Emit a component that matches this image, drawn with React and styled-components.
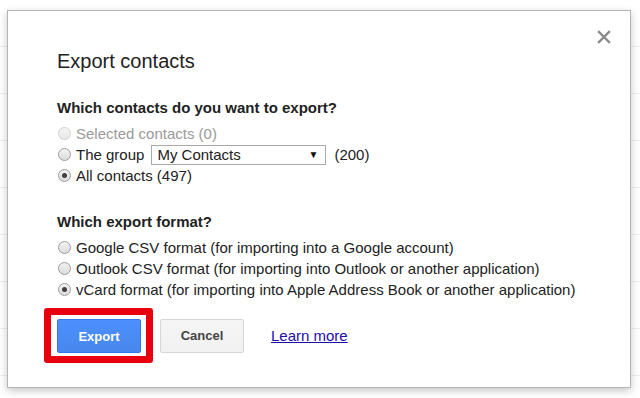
import React, { useState } from "react";
import styled, { createGlobalStyle } from "styled-components";

const GlobalStyle = createGlobalStyle`
  html, body {
    margin: 0;
    padding: 0;
    background: #fff;
  }
  body {
    font-family: "Liberation Sans", Arial, sans-serif;
    color: #222;
  }
`;

const Page = styled.div`
  position: relative;
  width: 640px;
  height: 398px;
  overflow: hidden;
  background: #fff;
`;

const BgRow = styled.div`
  height: 46px;
  border-bottom: 1px solid #efefef;
`;

const Dialog = styled.div`
  position: absolute;
  left: 7px;
  top: 10px;
  width: 624px;
  height: 378px;
  box-sizing: border-box;
  background: #fff;
  border: 1px solid #b4b4b4;
  box-shadow: 0 3px 8px rgba(0, 0, 0, 0.22);
  padding: 38px 0 0 49px;
`;

const Close = styled.button`
  position: absolute;
  right: 18px;
  top: 18px;
  border: 0;
  background: none;
  padding: 0;
  width: 16px;
  height: 16px;
  cursor: pointer;
`;

const Title = styled.h1`
  margin: 0;
  font-size: 20px;
  font-weight: normal;
  color: #222;
  line-height: 24px;
`;

const Section = styled.div`
  margin-top: ${(p) => p.$top}px;
`;

const Heading = styled.h2`
  margin: 0 0 6px;
  font-size: 15px;
  font-weight: bold;
  color: #222;
  line-height: 18px;
`;

const Option = styled.label`
  display: flex;
  align-items: center;
  height: 21px;
  font-size: 15px;
  color: ${(p) => (p.$disabled ? "#9a9a9a" : "#222")};
  cursor: ${(p) => (p.$disabled ? "default" : "pointer")};
`;

const Radio = styled.span`
  width: 13px;
  height: 13px;
  box-sizing: border-box;
  border-radius: 50%;
  margin: 0 5px 0 1px;
  flex: none;
  display: flex;
  align-items: center;
  justify-content: center;
  border: 1px solid ${(p) => (p.$disabled ? "#cfcfcf" : "#9c9c9c")};
  background: ${(p) =>
    p.$disabled
      ? "linear-gradient(#f4f4f4, #e8e8e8)"
      : "linear-gradient(#f2f2f2, #dcdcdc)"};

  &::after {
    content: "";
    width: 5px;
    height: 5px;
    border-radius: 50%;
    background: #404040;
    display: ${(p) => (p.$checked ? "block" : "none")};
  }
`;

const Select = styled.div`
  display: flex;
  align-items: center;
  justify-content: space-between;
  width: 175px;
  height: 20px;
  box-sizing: border-box;
  border: 1px solid #a9a9a9;
  margin: 0 8px 0 7px;
  padding: 0 7px 0 5px;
  font-size: 15px;
  color: #222;
`;

const Arrow = styled.span`
  font-size: 10px;
  color: #111;
`;

const Actions = styled.div`
  display: flex;
  align-items: center;
  margin-top: 8px;
  margin-left: -13px;
`;

const Highlight = styled.div`
  border: 7px solid #e8000e;
  border-radius: 3px;
  padding: 4px 5px 3px 6px;
  margin-right: 7px;
`;

const Button = styled.button`
  width: ${(p) => p.$w}px;
  height: 34px;
  box-sizing: border-box;
  border-radius: 2px;
  font-family: "Liberation Sans", Arial, sans-serif;
  font-size: 13px;
  font-weight: bold;
  cursor: pointer;
  border: 1px solid ${(p) => (p.$primary ? "#3079ed" : "#d6d6d6")};
  color: ${(p) => (p.$primary ? "#fff" : "#444")};
  background: ${(p) =>
    p.$primary
      ? "linear-gradient(#4d90fe, #4787ed)"
      : "linear-gradient(#f5f5f5, #f1f1f1)"};
`;

const Learn = styled.a`
  margin-left: 27px;
  font-size: 15px;
  color: #1a0dab;
  text-decoration: underline;
`;

function CloseIcon() {
  return (
    <svg width="16" height="16" viewBox="0 0 16 16">
      <path
        d="M3 3 L13 13 M13 3 L3 13"
        stroke="#8a8a8a"
        strokeWidth="2.4"
        strokeLinecap="square"
      />
    </svg>
  );
}

const contactOptions = [
  { id: "selected", label: "Selected contacts (0)", disabled: true },
  { id: "group", label: "The group" },
  { id: "all", label: "All contacts (497)" },
];

const formatOptions = [
  { id: "google", label: "Google CSV format (for importing into a Google account)" },
  { id: "outlook", label: "Outlook CSV format (for importing into Outlook or another application)" },
  { id: "vcard", label: "vCard format (for importing into Apple Address Book or another application)" },
];

export default function App() {
  const [who, setWho] = useState("all");
  const [format, setFormat] = useState("vcard");

  return (
    <Page>
      <GlobalStyle />
      {Array.from({ length: 9 }).map((_, i) => (
        <BgRow key={i} />
      ))}
      <Dialog>
        <Close aria-label="Close">
          <CloseIcon />
        </Close>
        <Title>Export contacts</Title>

        <Section $top={26}>
          <Heading>Which contacts do you want to export?</Heading>
          {contactOptions.map((o) => (
            <Option
              key={o.id}
              $disabled={o.disabled}
              onClick={() => !o.disabled && setWho(o.id)}
            >
              <Radio $checked={who === o.id} $disabled={o.disabled} />
              {o.label}
              {o.id === "group" && (
                <>
                  <Select>
                    My Contacts
                    <Arrow>▼</Arrow>
                  </Select>
                  (200)
                </>
              )}
            </Option>
          ))}
        </Section>

        <Section $top={27}>
          <Heading>Which export format?</Heading>
          {formatOptions.map((o) => (
            <Option key={o.id} onClick={() => setFormat(o.id)}>
              <Radio $checked={format === o.id} />
              {o.label}
            </Option>
          ))}
        </Section>

        <Actions>
          <Highlight>
            <Button $primary $w={84}>Export</Button>
          </Highlight>
          <Button $w={84}>Cancel</Button>
          <Learn href="#">Learn more</Learn>
        </Actions>
      </Dialog>
    </Page>
  );
}
